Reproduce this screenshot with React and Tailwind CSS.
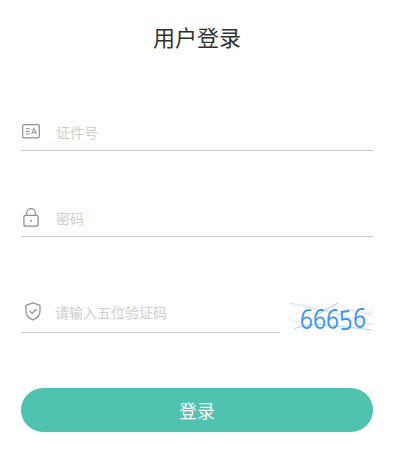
const font = { fontFamily: '"Noto Sans CJK SC", "Liberation Sans", sans-serif' };

function IdIcon() {
  return (
    <svg width="18" height="15" viewBox="0 0 18 15" fill="none" stroke="#8d9095" strokeWidth="1.2">
      <rect x="0.7" y="0.7" width="16.6" height="13.2" rx="1.5" />
      <path d="M4 4.7h3.6M4 7.3h3.6M4 9.9h3.6" strokeWidth="1" />
      <path d="M9.6 10.2l2.1-5.6h.6l2.1 5.6M10.4 8.3h3.2" strokeWidth="1" />
    </svg>
  );
}

function LockIcon() {
  return (
    <svg width="16" height="19" viewBox="0 0 16 19" fill="none" stroke="#8d9095" strokeWidth="1.3">
      <rect x="0.9" y="7.4" width="14.2" height="10.8" rx="1.6" />
      <path d="M3.6 7.4V5a4.4 4.4 0 0 1 8.8 0v2.4" />
      <path d="M8 11.8v2" strokeWidth="1.5" />
    </svg>
  );
}

function ShieldIcon() {
  return (
    <svg width="16" height="19" viewBox="0 0 16 19" fill="none" stroke="#8f939c" strokeWidth="1.3">
      <path d="M8 0.9l7 2.4v6c0 4-3 6.9-7 8.7-4-1.8-7-4.7-7-8.7v-6z" strokeLinejoin="round" />
      <path d="M4.7 9l2.4 2.4 4.2-4.2" />
    </svg>
  );
}

function Field({ icon, placeholder, gap, className, iconClass = "" }) {
  return (
    <div className={`flex items-center border-b border-[#cccccc] ${className}`}>
      <div className={`flex justify-center shrink-0 ${gap} ${iconClass}`}>{icon}</div>
      <span className="text-[14px] leading-[20px] text-[#cfcfcc]">{placeholder}</span>
    </div>
  );
}

function Captcha() {
  return (
    <div className="relative w-[85px] h-[32px] bg-white">
      <svg className="absolute inset-0" width="85" height="32" viewBox="0 0 85 32" fill="none">
        <path d="M2 2C20 6 50 12 84 24" stroke="#bfe0ea" strokeWidth="0.9" />
        <path d="M6 28C24 20 48 25 84 29" stroke="#9edbe2" strokeWidth="1" />
        <path d="M28 14L50 2" stroke="#a9c3ee" strokeWidth="1" />
        <path d="M58 8L84 14" stroke="#cadcea" strokeWidth="0.9" />
        <path d="M70 20L85 8" stroke="#d0e4ec" strokeWidth="0.9" />
        <path d="M0 16L14 25" stroke="#d3e6ec" strokeWidth="0.9" />
        <g fill="#dccfe8" stroke="none">
          <circle cx="4" cy="5" r="0.7" /><circle cx="16" cy="3" r="0.7" /><circle cx="30" cy="6" r="0.7" />
          <circle cx="40" cy="3" r="0.7" /><circle cx="78" cy="3" r="0.8" /><circle cx="83" cy="12" r="0.7" />
          <circle cx="9" cy="13" r="0.7" /><circle cx="70" cy="28" r="0.7" /><circle cx="48" cy="30" r="0.7" />
        </g>
      </svg>
      <div
        className="absolute left-[12px] top-[1px] flex text-[23px] leading-[32px] font-normal text-[#3d94ec] scale-y-[1.18]"
        style={{ fontFamily: '"Open Sans", sans-serif' }}
      >
        <span className="rotate-[3deg]">6</span>
        <span className="-rotate-[2deg]">6</span>
        <span className="rotate-[4deg]">6</span>
        <span className="-rotate-[6deg] translate-y-[1px]">5</span>
        <span className="rotate-[2deg] -translate-y-[1px]">6</span>
      </div>
    </div>
  );
}

export default function App() {
  return (
    <div className="w-[402px] h-[463px] bg-white pl-[21px] pr-[29px] pt-[20px]" style={font}>
      <h1 className="text-center text-[22px] leading-[32px] font-normal text-[#303133]">用户登录</h1>

      <Field
        className="mt-[55px] h-[44px] pl-px pt-[6px]"
        gap="w-[18px] mr-[16px]"
        icon={<IdIcon />}
        placeholder="证件号"
      />
      <Field
        className="mt-[42px] h-[44px] pl-[2px] pt-[6px]"
        gap="w-[16px] mr-[17px]"
        icon={<LockIcon />}
        placeholder="密码"
      />

      <div className="mt-[63px] flex items-end justify-between">
        <Field
          className="w-[259px] h-[33px] pl-[4px] pb-[8px]"
          gap="w-[16px] mr-[14px]"
          iconClass="-translate-y-[1px]"
          icon={<ShieldIcon />}
          placeholder="请输入五位验证码"
        />
        <Captcha />
      </div>

      <button className="mt-[55px] block w-full h-[44px] rounded-[22px] bg-[#4fc3b0] text-white text-[18px]">
        登录
      </button>
    </div>
  );
}
